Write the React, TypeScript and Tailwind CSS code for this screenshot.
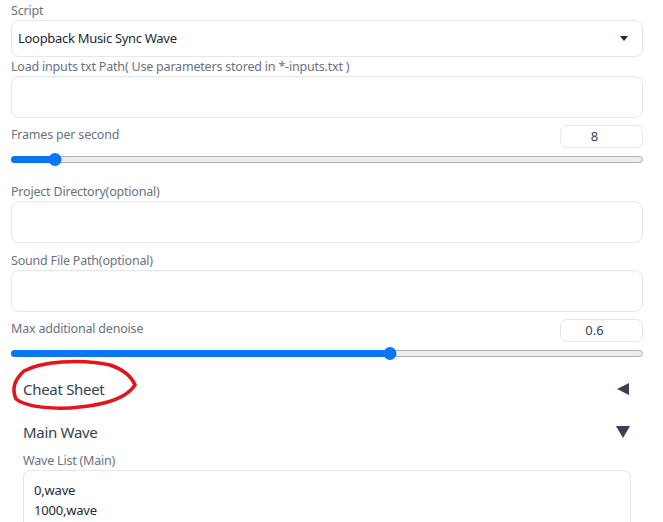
const font = { fontFamily: '"Source Sans Pro", "Noto Sans", sans-serif' };

function Label({ children }: { children: React.ReactNode }) {
  return <div className="text-[12.5px] leading-[19px] tracking-[-0.2px] text-[#6b7280]">{children}</div>;
}

function TextBox() {
  return <div className="h-[42px] rounded-[8px] border border-[#e5e7eb] bg-white shadow-[inset_0_1px_2px_rgba(0,0,0,0.03)]" />;
}

function SliderRow({ label, value, pct }: { label: string; value: string; pct: number }) {
  return (
    <div className="flex flex-col">
      <div className="flex items-start justify-between">
        <Label>{label}</Label>
        <div className="flex h-[23px] w-[83px] items-center justify-center rounded-[7px] border border-[#e5e7eb] pr-[14px] text-[13px] text-[#374151]">
          {value}
        </div>
      </div>
      <div className="relative mt-[5px] h-[13px]">
        <div className="absolute left-0 right-0 top-[3px] h-[7px] rounded-full border border-[#b0b0b0] bg-[#ececec]" />
        <div
          className="absolute left-0 top-[3px] h-[7px] rounded-l-full bg-[#0a76f6]"
          style={{ width: `${pct}%` }}
        />
        <div
          className="absolute top-0 h-[13px] w-[13px] -translate-x-1/2 rounded-full bg-[#0a76f6]"
          style={{ left: `${pct}%` }}
        />
      </div>
    </div>
  );
}

export default function App() {
  return (
    <div className="min-h-[522px] bg-white" style={font}>
      <div className="ml-[11px] w-[632px] flex flex-col pt-[1px]">
        <Label>Script</Label>
        <div className="flex h-[37px] items-center justify-between rounded-[8px] border border-[#e5e7eb] pl-[6px] pr-[14px]">
          <span className="text-[13px] tracking-[-0.3px] text-[#1f2937]">Loopback Music Sync Wave</span>
          <span className="h-0 w-0 border-x-[4px] border-t-[5px] border-x-transparent border-t-[#1f2937]" />
        </div>
        <Label>Load inputs txt Path( Use parameters stored in *-inputs.txt )</Label>
        <TextBox />
        <div className="mt-[7px]">
          <SliderRow label="Frames per second" value="8" pct={7} />
        </div>
        <div className="mt-[16px]">
          <Label>Project Directory(optional)</Label>
        </div>
        <TextBox />
        <div className="mt-[8px]">
          <Label>Sound File Path(optional)</Label>
        </div>
        <TextBox />
        <div className="mt-[7px]">
          <SliderRow label="Max additional denoise" value="0.6" pct={60} />
        </div>
        <div className="relative mt-[17px] flex h-[24px] items-center justify-between pl-[12px] pr-[14px]">
          <span className="text-[15px] tracking-[-0.3px] text-[#374151]">Cheat Sheet</span>
          <span className="h-0 w-0 border-y-[6px] border-r-[12px] border-y-transparent border-r-[#374151]" />
          <svg className="absolute left-[-11px] top-[-22px]" width="150" height="60" viewBox="0 355 150 60">
            <path
              d="M24 371 C40 362, 80 358, 110 365 C125 370, 132 378, 135 385 C128 396, 110 404, 80 407 C55 410, 25 407, 16 399 C12 390, 14 380, 24 371 Z"
              fill="none"
              stroke="#e2141c"
              strokeWidth="3.5"
            />
          </svg>
        </div>
        <div className="mt-[19px] flex h-[24px] items-center justify-between pl-[12px] pr-[13px]">
          <span className="text-[15px] tracking-[-0.3px] text-[#374151]">Main Wave</span>
          <span className="h-0 w-0 border-x-[7px] border-t-[12px] border-x-transparent border-t-[#374151]" />
        </div>
        <div className="mt-[7px] pl-[12px] pr-[12px]">
          <Label>Wave List (Main)</Label>
          <div className="h-[60px] rounded-t-[8px] border border-b-0 border-[#e5e7eb] px-[10px] pt-[9px] text-[13px] leading-[20px] tracking-[-0.2px] text-[#1f2937]">
            <div>0,wave</div>
            <div>1000,wave</div>
          </div>
        </div>
      </div>
    </div>
  );
}
